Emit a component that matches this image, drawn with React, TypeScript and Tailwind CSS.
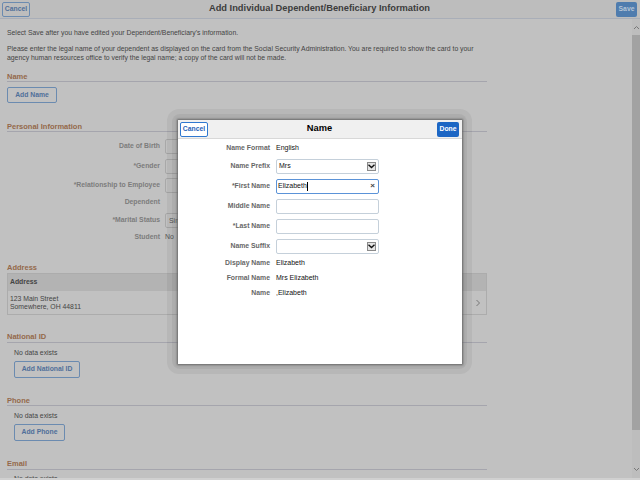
import React from "react";

const Heading = ({ children, cls }: { children: React.ReactNode; cls: string }) => (
  <div className={`${cls} w-[480px] border-b border-[#a5a5ad] text-[7.5px] leading-[9px] font-bold text-[#94694a]`}>{children}</div>
);

const OutlineBtn = ({ children, cls }: { children: React.ReactNode; cls: string }) => (
  <div className={`${cls} border border-[#6b8bb0] rounded-[2px] flex items-center justify-center text-[6.8px] font-bold text-[#4f6f9a]`}>{children}</div>
);

const BgRow = ({ label, value, box, h }: { label: string; value?: string; box?: boolean; h: string }) => (
  <div className={`${h} flex items-center`}>
    <div className="w-[153px] text-right text-[6.85px] font-bold text-[#7c7c7c]">{label}</div>
    <div className={`ml-[5px] ${box ? "w-[40px] h-[15px] border border-[#a8a8a8] rounded-[2px] pl-[3px] leading-[13px]" : ""} text-[6.9px] text-[#555]`}>{value}</div>
  </div>
);

const Chevron = () => (
  <svg width="7" height="5" viewBox="0 0 7 5" fill="none"><path d="M0.5 0.8 L3.5 3.6 L6.5 0.8" stroke="#111" strokeWidth="1.4" /></svg>
);

const ModalLabel = ({ children }: { children: React.ReactNode }) => (
  <div className="w-[92px] shrink-0 text-right text-[6.85px] font-bold text-[#666]">{children}</div>
);

const Field = ({ label, value, select, focus }: { label: string; value?: string; select?: boolean; focus?: boolean }) => (
  <div className="h-[20px] flex items-center">
    <ModalLabel>{label}</ModalLabel>
    <div className={`ml-[6px] w-[103px] h-[15px] rounded-[2px] border flex items-center text-[7px] text-[#111] ${focus ? "border-[#5b93d8] pl-[1px]" : "border-[#c5d0da] pl-[2px]"}`}>
      <span>{value}</span>
      {focus && <span className="w-px h-[9px] bg-black" />}
      {select && (
        <div className="ml-auto mr-[2px] w-[9px] h-[9px] border border-[#8a8a8a] bg-[#e4e4e4] flex items-center justify-center"><Chevron /></div>
      )}
      {focus && <span className="ml-auto mr-[3px] text-[8px] font-bold leading-none text-[#444]">×</span>}
    </div>
  </div>
);

const Info = ({ label, value, h }: { label: string; value: string; h: string }) => (
  <div className={`${h} flex items-center`}>
    <ModalLabel>{label}</ModalLabel>
    <div className="ml-[6px] text-[7px] text-[#111]">{value}</div>
  </div>
);

export default function App() {
  return (
    <div className="relative w-[640px] h-[480px] overflow-hidden bg-[#c1c1c1] opacity-[0.999] [will-change:opacity] font-['Liberation_Sans',Arial,sans-serif]">
      <div className="h-[19px] border-b border-[#a9aeb8] grid grid-cols-[1fr_auto_1fr] items-center pl-[2px] pr-[3px] bg-[#bdbdbd]">
        <div className="w-[28px] h-[15px] border border-[#6b8bb0] rounded-[2px] flex items-center justify-center text-[6.8px] font-bold text-[#4f6f9a]">Cancel</div>
        <div className="text-[9.3px] font-bold text-[#3c3c3c]">Add Individual Dependent/Beneficiary Information</div>
        <div className="justify-self-end w-[21px] h-[15px] bg-[#4f7cae] rounded-[2px] flex items-center justify-center text-[6.8px] font-bold text-[#b5c4d6]">Save</div>
      </div>
      <div className="flex h-[461px]">
        <div className="flex-1 pl-[7px] overflow-hidden">
          <div className="mt-[9px] text-[6.85px] leading-[9px] text-[#444]">Select Save after you have edited your Dependent/Beneficiary's information.</div>
          <div className="mt-[7px] w-[480px] text-[6.85px] leading-[9px] text-[#444]">
            Please enter the legal name of your dependent as displayed on the card from the Social Security Administration. You are required to show the card to your agency human resources office to verify the legal name; a copy of the card will not be made.
          </div>
          <Heading cls="mt-[10px] h-[10px]">Name</Heading>
          <OutlineBtn cls="mt-[5px] w-[50px] h-[16px]">Add Name</OutlineBtn>
          <Heading cls="mt-[19px] h-[10px]">Personal Information</Heading>
          <div className="mt-[4px]">
            <BgRow label="Date of Birth" box h="h-[20px]" />
            <BgRow label="*Gender" box h="h-[20px]" />
            <BgRow label="*Relationship to Employee" box h="h-[19px]" />
            <BgRow label="Dependent" h="h-[15px]" />
            <BgRow label="*Marital Status" value="Single" box h="h-[20px]" />
            <BgRow label="Student" value="No" h="h-[14px]" />
          </div>
          <div className="mt-[19px] text-[7.5px] leading-[9px] font-bold text-[#94694a]">Address</div>
          <div className="mt-[1px] w-[480px] h-[42px] border border-[#acacac]">
            <div className="h-[17px] bg-[#b3b3b3] pl-[2px] flex items-center text-[6.85px] font-bold text-[#444]">Address</div>
            <div className="flex justify-between items-center h-[23px] pl-[2px] pr-[5px]">
              <div className="text-[6.85px] leading-[8px] text-[#444]">123 Main Street<br />Somewhere, OH 44811</div>
              <svg width="6" height="8" viewBox="0 0 6 8" fill="none"><path d="M1.5 1 L4.5 4 L1.5 7" stroke="#777" strokeWidth="1" /></svg>
            </div>
          </div>
          <Heading cls="mt-[17px] h-[11px]">National ID</Heading>
          <div className="pl-[7px]">
            <div className="mt-[5px] text-[6.85px] leading-[9px] text-[#444]">No data exists</div>
            <OutlineBtn cls="mt-[4px] w-[66px] h-[17px]">Add National ID</OutlineBtn>
          </div>
          <Heading cls="mt-[18px] h-[10px]">Phone</Heading>
          <div className="pl-[7px]">
            <div className="mt-[5px] text-[6.85px] leading-[9px] text-[#444]">No data exists</div>
            <OutlineBtn cls="mt-[4px] w-[51px] h-[17px]">Add Phone</OutlineBtn>
          </div>
          <Heading cls="mt-[18px] h-[11px]">Email</Heading>
          <div className="pl-[7px] mt-[4px] text-[6.85px] leading-[9px] text-[#444]">No data exists</div>
        </div>
        <div className="w-[8px] flex flex-col bg-[#bdbdbd]">
          <div className="h-[16px] flex items-center justify-center">
            <svg width="7" height="5" viewBox="0 0 7 5" fill="none"><path d="M1 4 L3.5 1.5 L6 4" stroke="#777" strokeWidth="1" /></svg>
          </div>
          <div className="h-[395px] bg-[#a2a2a2]" />
          <div className="flex-1 flex items-end justify-center pb-[8px]">
            <svg width="7" height="5" viewBox="0 0 7 5" fill="none"><path d="M1 1 L3.5 3.5 L6 1" stroke="#777" strokeWidth="1" /></svg>
          </div>
        </div>
      </div>
      <div className="absolute left-0 right-0 bottom-0 h-[2px] bg-[#d0d0d0]" />

      <div className="absolute left-[167px] top-[109px] w-[305px] h-[265px] rounded-[12px] bg-[#0000000d]" />
      <div className="absolute left-[172px] top-[114px] w-[295px] h-[255px] rounded-[8px] bg-[#0000000d]" />
      <div className="absolute left-[178px] top-[120px] w-[284px] h-[244px] bg-white shadow-[0_0_2px_1px_#666] flex flex-col">
        <div className="h-[19px] bg-[#f0f0f0] border-b border-[#d8d8d8] grid grid-cols-[1fr_auto_1fr] items-center pl-[2px] pr-[3px]">
          <div className="w-[28px] h-[15px] bg-white border border-[#2f78d0] rounded-[2px] flex items-center justify-center text-[6.8px] font-bold text-[#1f62b8]">Cancel</div>
          <div className="text-[9.3px] font-bold text-black">Name</div>
          <div className="justify-self-end w-[22px] h-[15px] bg-[#1c66c4] rounded-[2px] flex items-center justify-center text-[6.8px] font-bold text-white">Done</div>
        </div>
        <Info label="Name Format" value="English" h="h-[17px] pt-[1px]" />
        <Field label="Name Prefix" value="Mrs" select />
        <Field label="*First Name" value="Elizabeth" focus />
        <Field label="Middle Name" />
        <Field label="*Last Name" />
        <Field label="Name Suffix" select />
        <Info label="Display Name" value="Elizabeth" h="h-[15px]" />
        <Info label="Formal Name" value="Mrs Elizabeth" h="h-[15px]" />
        <Info label="Name" value=",Elizabeth" h="h-[15px]" />
      </div>
    </div>
  );
}
